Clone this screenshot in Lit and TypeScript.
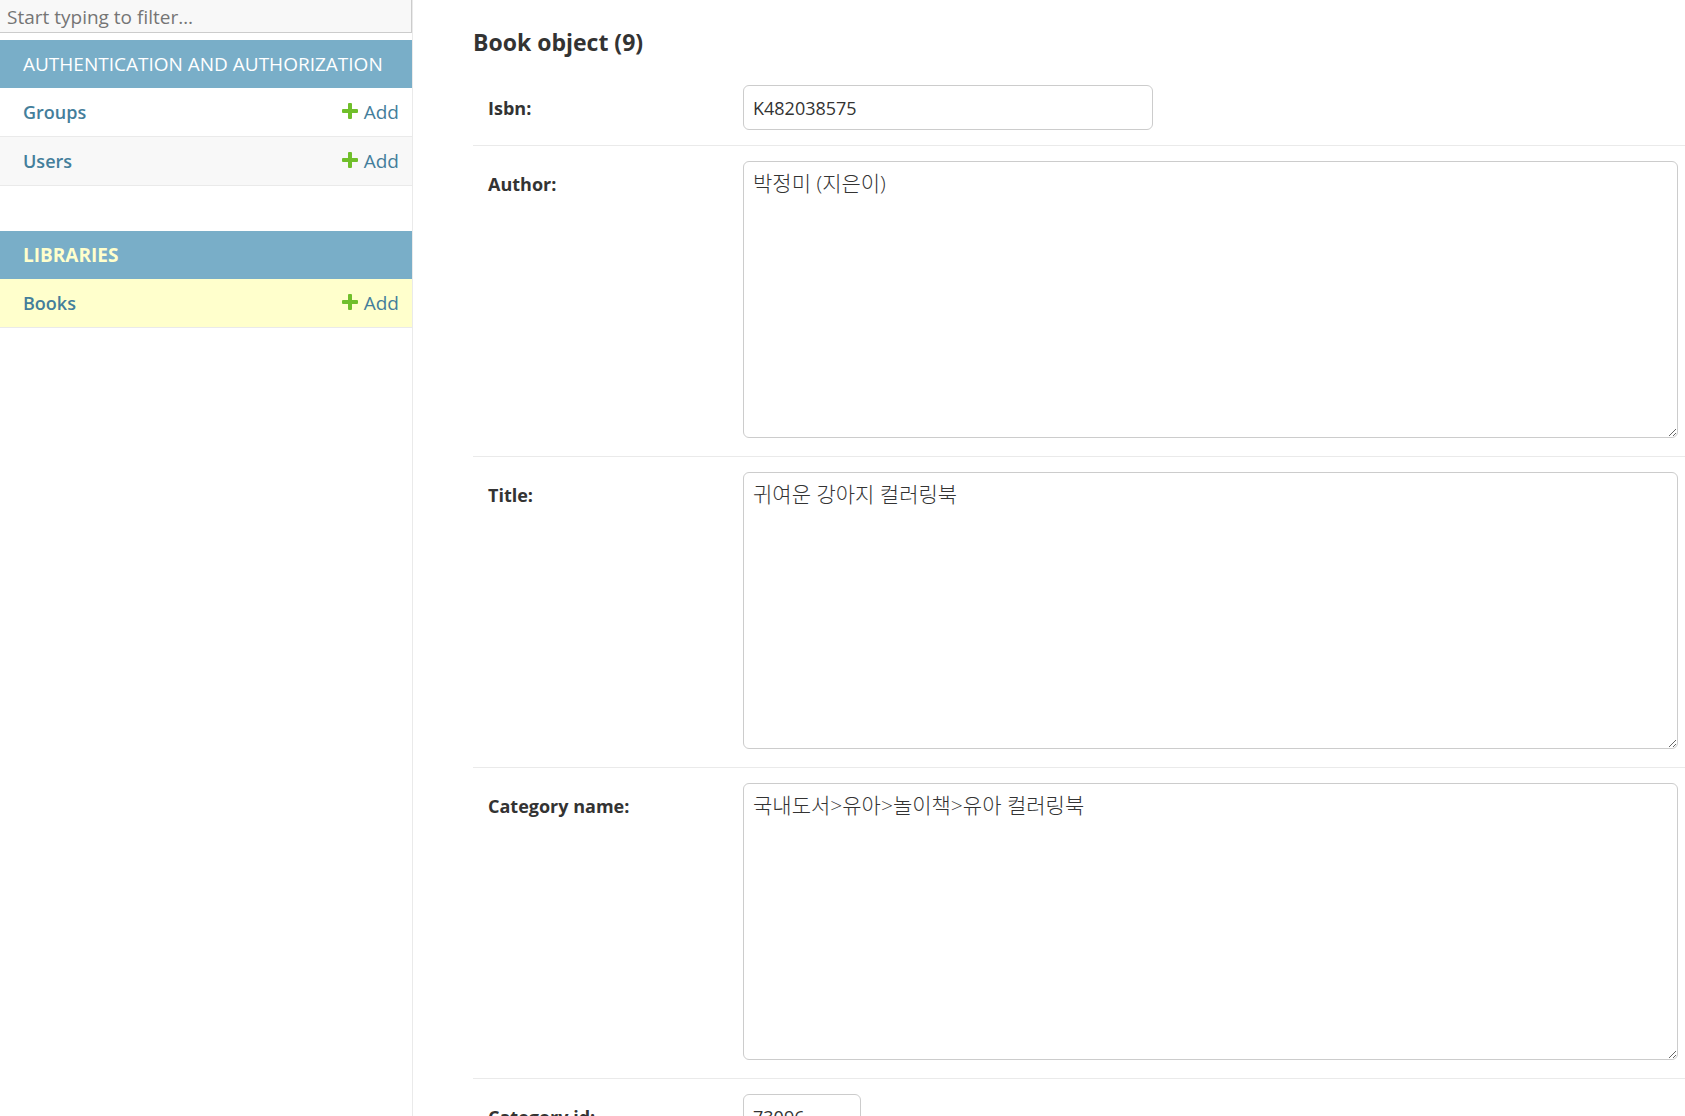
import { LitElement, html, css } from "lit";
import { customElement, property } from "lit/decorators.js";
import { classMap } from "lit/directives/class-map.js";

interface Model {
  name: string;
  current?: boolean;
}

interface AppModule {
  caption: string;
  current?: boolean;
  models: Model[];
}

interface Field {
  id: string;
  label: string;
  value: string;
  kind: "text" | "number" | "area";
}

const MODULES: AppModule[] = [
  {
    caption: "Authentication and Authorization",
    models: [{ name: "Groups" }, { name: "Users" }],
  },
  {
    caption: "Libraries",
    current: true,
    models: [{ name: "Books", current: true }],
  },
];

const FIELDS: Field[] = [
  { id: "id_isbn", label: "Isbn:", value: "K482038575", kind: "text" },
  { id: "id_author", label: "Author:", value: "박정미 (지은이)", kind: "area" },
  { id: "id_title", label: "Title:", value: "귀여운 강아지 컬러링북", kind: "area" },
  {
    id: "id_category_name",
    label: "Category name:",
    value: "국내도서>유아>놀이책>유아 컬러링북",
    kind: "area",
  },
  { id: "id_category_id", label: "Category id:", value: "73096", kind: "number" },
];

@customElement("nav-sidebar")
export class NavSidebar extends LitElement {
  @property({ attribute: false }) modules: AppModule[] = [];

  static styles = css`
    :host {
      display: block;
      box-sizing: border-box;
      border-right: 1px solid #eaeaea;
    }
    .filter {
      display: block;
      box-sizing: border-box;
      width: 100%;
      height: 33px;
      margin: 0 0 7px;
      padding: 2px 7px 0;
      border: 1px solid #ccc;
      border-width: 0 1px 1px 0;
      border-radius: 0;
      outline: none;
      background: #f8f8f8;
      color: #333;
      font: inherit;
      font-size: 19px;
    }
    .filter::placeholder {
      color: #757575;
    }
    .module {
      width: 100%;
      margin-bottom: 45px;
      border-collapse: separate;
      border-spacing: 0;
    }
    .caption {
      height: 48px;
      padding: 0 23px;
      background: #79aec8;
      text-align: left;
      text-transform: uppercase;
      white-space: nowrap;
      font-size: 19px;
      line-height: 48px;
    }
    .section {
      color: #fff;
      text-decoration: none;
    }
    .section.current {
      color: #ffc;
      font-weight: 700;
    }
    .name,
    .action {
      height: 48px;
      padding: 0;
      border-bottom: 1px solid #eaeaea;
      line-height: 48px;
    }
    .name {
      padding-left: 23px;
      text-align: left;
      font-weight: 600;
    }
    .action {
      padding-right: 13px;
      text-align: right;
      font-size: 19px;
    }
    .model:nth-child(even) {
      background: #f8f8f8;
    }
    .model.current {
      background: #ffc;
    }
    .link {
      color: #447e9b;
      text-decoration: none;
    }
    .add {
      display: flex;
      align-items: center;
      justify-content: flex-end;
      gap: 6px;
    }
    .plus {
      width: 16px;
      height: 16px;
      margin-bottom: 3px;
      fill: #70bf2b;
    }
  `;

  render() {
    return html`
      <nav aria-label="Sidebar">
        <input class="filter" type="search" placeholder="Start typing to filter…" aria-label="Filter navigation items" />
        ${this.modules.map(
          (module) => html`
            <table class="module">
              <caption class="caption">
                <a href="#" class=${classMap({ section: true, current: !!module.current })}>${module.caption}</a>
              </caption>
              <tbody>
                ${module.models.map(
                  (model) => html`
                    <tr class=${classMap({ model: true, current: !!model.current })}>
                      <th class="name" scope="row"><a class="link" href="#">${model.name}</a></th>
                      <td class="action">
                        <a class="link add" href="#"
                          ><svg class="plus" viewBox="0 0 16 16" aria-hidden="true">
                            <path
                              d="M7 0h2q1 0 1 1v5h5q1 0 1 1v2q0 1-1 1h-5v5q0 1-1 1h-2q-1 0-1-1v-5h-5q-1 0-1-1v-2q0-1 1-1h5v-5q0-1 1-1z"
                            /></svg
                          ><span>Add</span></a
                        >
                      </td>
                    </tr>
                  `
                )}
              </tbody>
            </table>
          `
        )}
      </nav>
    `;
  }
}

@customElement("book-form")
export class BookForm extends LitElement {
  @property({ attribute: false }) fields: Field[] = [];

  static styles = css`
    :host {
      display: block;
    }
    .row {
      display: flex;
      align-items: flex-start;
      padding: 15px 7px 15px 15px;
      border-bottom: 1px solid #eaeaea;
    }
    .label {
      flex: 0 0 255px;
      padding-top: 8px;
      color: #333;
      font-weight: 700;
      line-height: 30px;
    }
    .control {
      box-sizing: border-box;
      border: 1px solid #ccc;
      border-radius: 6px;
      outline: none;
      background: #fff;
      color: #333;
      font: inherit;
    }
    .text {
      width: 410px;
      height: 45px;
      padding: 0 9px;
    }
    .number {
      width: 118px;
      appearance: textfield;
    }
    .area {
      flex: 1;
      min-width: 0;
      height: 277px;
      margin-bottom: 3px;
      padding: 7px 9px;
      font-size: 21px;
      font-weight: 300;
      line-height: 28px;
      resize: both;
    }
  `;

  private control(field: Field) {
    if (field.kind === "area") {
      return html`<textarea class="control area" id=${field.id} .value=${field.value} spellcheck="false"></textarea>`;
    }
    return html`<input
      class=${classMap({ control: true, text: true, number: field.kind === "number" })}
      id=${field.id}
      type=${field.kind}
      .value=${field.value}
    />`;
  }

  render() {
    return html`
      <form>
        ${this.fields.map(
          (field) => html`
            <div class="row">
              <label class="label" for=${field.id}>${field.label}</label>
              ${this.control(field)}
            </div>
          `
        )}
      </form>
    `;
  }
}

@customElement("app-root")
export class AppRoot extends LitElement {
  static styles = css`
    :host {
      display: block;
      height: 100vh;
      overflow: hidden;
      background: #fff;
      color: #333;
      font-family: "Open Sans", "Noto Sans CJK KR", sans-serif;
      font-size: 18px;
    }
    .layout {
      display: flex;
      height: 100%;
    }
    .sidebar {
      flex: 0 0 413px;
    }
    .content {
      flex: 1;
      min-width: 0;
      padding: 22px 0 0 60px;
    }
    .title {
      margin: 0 0 8px;
      font-size: 23px;
      font-weight: 700;
      line-height: 40px;
    }
  `;

  render() {
    return html`
      <div class="layout">
        <nav-sidebar class="sidebar" .modules=${MODULES}></nav-sidebar>
        <main class="content">
          <h2 class="title">Book object (9)</h2>
          <book-form .fields=${FIELDS}></book-form>
        </main>
      </div>
    `;
  }
}
